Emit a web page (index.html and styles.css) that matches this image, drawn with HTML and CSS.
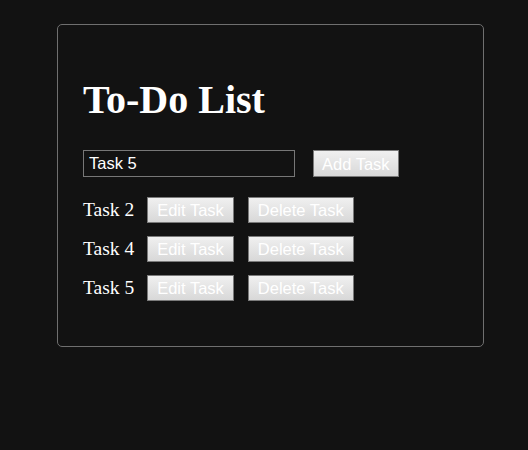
FILE: index.html
```html
<!DOCTYPE html>
<html>
<head>
<meta charset="utf-8">
<title>To-Do List</title>
<link rel="stylesheet" href="styles.css">
</head>
<body>
<div class="container">
  <h1 class="title">To-Do List</h1>
  <div class="add-row">
    <input class="task-input" type="text" value="Task 5">
    <button class="btn">Add Task</button>
  </div>
  <ul class="task-list">
    <li class="task"><span class="task-name">Task 2</span><button class="btn">Edit Task</button><button class="btn">Delete Task</button></li>
    <li class="task"><span class="task-name">Task 4</span><button class="btn">Edit Task</button><button class="btn">Delete Task</button></li>
    <li class="task"><span class="task-name">Task 5</span><button class="btn">Edit Task</button><button class="btn">Delete Task</button></li>
  </ul>
</div>
</body>
</html>
```
FILE: styles.css
```css
html, body {
  margin: 0;
  padding: 0;
  background: #121212;
  color: #ffffff;
  font-family: "Liberation Serif", "Times New Roman", serif;
}
body {
  padding: 24px 0 0 57px;
}
.container {
  width: 375px;
  padding: 25px 25px 45px 25px;
  border: 1px solid #6f6f6f;
  border-radius: 5px;
}
.title {
  margin: 27px 0 27px 0;
  font-size: 40px;
  font-weight: bold;
  line-height: 46px;
}
.add-row {
  display: flex;
  align-items: center;
  gap: 18px;
}
.task-input {
  box-sizing: border-box;
  width: 212px;
  height: 27px;
  margin: 0;
  padding: 0 5px;
  background: #121212;
  color: #ffffff;
  border: 1px solid #777777;
  font-family: "Liberation Sans", Arial, sans-serif;
  font-size: 16.5px;
  outline: none;
}
.btn {
  box-sizing: border-box;
  height: 26px;
  margin: 0;
  padding: 0 9px;
  border: 1px solid #7a7a7a;
  background: linear-gradient(#f0f0f0, #d8d8d8);
  color: #ffffff;
  font-family: "Liberation Sans", Arial, sans-serif;
  font-size: 16.5px;
  line-height: 24px;
}
.add-row .btn {
  height: 27px;
  padding: 0 8px;
}
.task-list {
  list-style: none;
  margin: 20px 0 0 0;
  padding: 0;
  display: flex;
  flex-direction: column;
  gap: 13px;
}
.task {
  display: flex;
  align-items: center;
  gap: 14px;
}
.task-name {
  font-size: 19.5px;
  line-height: 26px;
  margin-right: -1px;
}
```
